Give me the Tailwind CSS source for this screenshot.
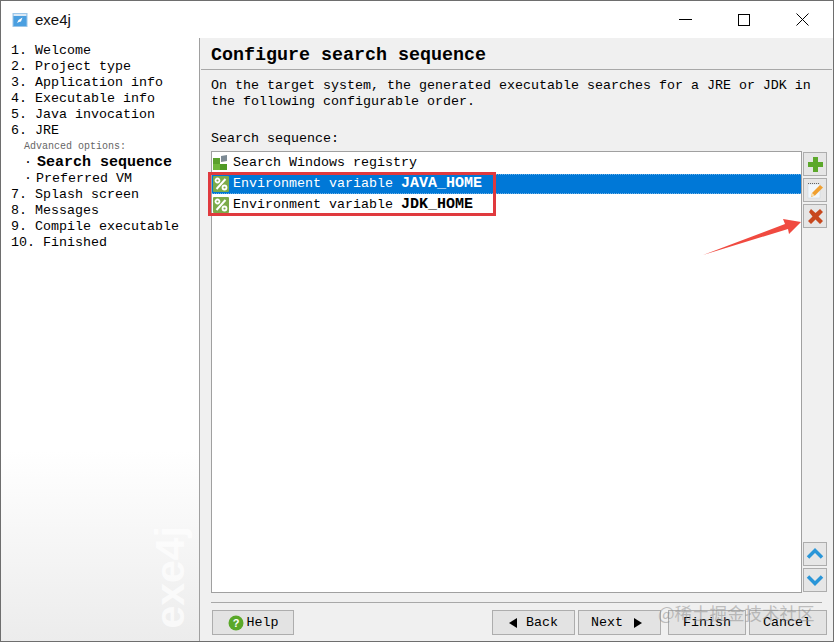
<!DOCTYPE html>
<html>
<head>
<meta charset="utf-8">
<script src="https://cdn.jsdelivr.net/npm/@tailwindcss/browser@4"></script>
</head>
<body class="bg-white">
<div class="relative w-[834px] h-[642px] overflow-hidden flex flex-col bg-white border border-[#6e6e6e] font-['Liberation_Mono',monospace] text-[13.33px] leading-4 text-black">

    <!-- title bar -->
    <div class="h-[37px] shrink-0 flex items-center bg-white">
        <svg class="ml-[11px] w-4 h-4" viewBox="0 0 16 16">
            <rect x="1" y="1.5" width="14" height="13" fill="#4a9fe0" stroke="#9cc6e8"/>
            <rect x="1.5" y="2" width="13" height="2" fill="#dbe9f5"/>
            <path d="M5 11l1.5-3 4-2.500-1.500 4-2 .5z" fill="#fff"/>
        </svg>
        <span class="ml-[7px] font-['Liberation_Sans',sans-serif] text-[15px] text-[#111]">exe4j</span>
        <div class="ml-auto flex items-center mr-[24px] gap-[46px]">
            <svg class="w-[13px] h-[13px]" viewBox="0 0 13 13"><path d="M0 6.500h13" stroke="#000" stroke-width="1"/></svg>
            <svg class="w-[12px] h-[12px]" viewBox="0 0 12 12"><rect x=".5" y=".5" width="11" height="11" fill="none" stroke="#000"/></svg>
            <svg class="w-[13px] h-[13px]" viewBox="0 0 13 13"><path d="M.5.5l12 12M12.500.5l-12 12" stroke="#000"/></svg>
        </div>
    </div>

    <div class="flex flex-1 min-h-0">
        <!-- sidebar -->
        <div class="relative w-[199px] shrink-0 bg-white border-r border-[#a0a0a0] pl-[10px] pt-[5px]">
            <div class="absolute left-0 right-0 bottom-0 h-[190px] bg-gradient-to-b from-white to-[#ececec]"></div>
            <div class="relative">
                <div class="whitespace-pre">1. Welcome</div>
                <div class="whitespace-pre">2. Project type</div>
                <div class="whitespace-pre">3. Application info</div>
                <div class="whitespace-pre">4. Executable info</div>
                <div class="whitespace-pre">5. Java invocation</div>
                <div class="whitespace-pre">6. JRE</div>
                <div class="pl-[13px] text-[10px] text-[#666]">Advanced options:</div>
                <div class="pl-[13px] whitespace-pre"><span class="inline-block w-[13px]">·</span><span class="font-bold text-[15px]">Search sequence</span></div>
                <div class="pl-[13px] whitespace-pre"><span class="inline-block w-[12px]">·</span>Preferred VM</div>
                <div class="whitespace-pre">7. Splash screen</div>
                <div class="whitespace-pre">8. Messages</div>
                <div class="whitespace-pre">9. Compile executable</div>
                <div class="whitespace-pre">10. Finished</div>
            </div>
            <div class="absolute left-[150px] bottom-[12px] [writing-mode:vertical-rl] rotate-180 font-['Liberation_Sans',sans-serif] font-bold text-[41px] leading-[38px] text-white/70">exe4j</div>
        </div>

        <!-- main panel -->
        <div class="flex-1 min-w-0 flex flex-col bg-[#f0f0f0]">
            <div class="mx-[1px] pl-[10px] pt-[5px] h-[32px] shrink-0 flex items-center border-b border-[#a8a8a8]">
                <h1 class="font-bold text-[18.33px] leading-6">Configure search sequence</h1>
            </div>
            <div class="pl-[11px] pt-[8px]">
                <p class="whitespace-pre">On the target system, the generated executable searches for a JRE or JDK in</p>
                <p class="whitespace-pre">the following configurable order.</p>
            </div>
            <div class="pl-[11px] mt-[21px] h-[16px]">Search sequence:</div>

            <div class="flex pl-[11px] mt-[4px] h-[442px]">
                <div class="w-[591px] bg-white border border-[#a0a0a0] pt-[1px]">
                    <div class="h-[20px] mb-[1px] flex items-center pl-[1px]">
                        <svg class="w-4 h-4 mr-[4px]" viewBox="0 0 16 16">
                            <rect x="0" y="3" width="7" height="6" fill="#5aa02c"/>
                            <rect x="0" y="9" width="7" height="6" fill="#6fb63a"/>
                            <rect x="7" y="9" width="7" height="6" fill="#4f9a26"/>
                            <path d="M8 1l6-1v6l-6 1z" fill="#7d8a94"/>
                        </svg>
                        <span>Search Windows registry</span>
                    </div>
                    <div class="h-[20px] mb-[1px] flex items-center pl-[1px] bg-[#0078d7] text-white border-y border-dotted border-[#6bb0e6]">
                        <svg class="w-4 h-4 mr-[4px]" viewBox="0 0 16 16">
                            <rect width="16" height="16" rx="1" fill="#7cab4a"/>
                            <path d="M3.500 13L12.500 3" stroke="#fff" stroke-width="2"/>
                            <circle cx="4.500" cy="4.500" r="2" fill="none" stroke="#fff" stroke-width="1.800"/>
                            <circle cx="11.500" cy="11.500" r="2" fill="none" stroke="#fff" stroke-width="1.800"/>
                        </svg>
                        <span class="whitespace-pre">Environment variable <b class="text-[15px]">JAVA_HOME</b></span>
                    </div>
                    <div class="h-[20px] flex items-center pl-[1px]">
                        <svg class="w-4 h-4 mr-[4px]" viewBox="0 0 16 16">
                            <rect width="16" height="16" rx="1" fill="#7cab4a"/>
                            <path d="M3.500 13L12.500 3" stroke="#fff" stroke-width="2"/>
                            <circle cx="4.500" cy="4.500" r="2" fill="none" stroke="#fff" stroke-width="1.800"/>
                            <circle cx="11.500" cy="11.500" r="2" fill="none" stroke="#fff" stroke-width="1.800"/>
                        </svg>
                        <span class="whitespace-pre">Environment variable <b class="text-[15px]">JDK_HOME</b></span>
                    </div>
                </div>

                <div class="ml-[1px] w-[24px] pt-[1px] pb-[1px] flex flex-col">
                    <button class="w-[24px] h-[24px] mb-[2px] flex items-center justify-center bg-[#e6e6e6] border border-[#adadad]">
                        <svg class="w-[15px] h-[15px]" viewBox="0 0 15 15"><path d="M5 0h5v5h5v5h-5v5H5v-5H0V5h5z" fill="#5ca82b"/></svg>
                    </button>
                    <button class="w-[24px] h-[24px] mb-[2px] flex items-center justify-center bg-[#e6e6e6] border border-[#adadad]">
                        <svg class="w-[17px] h-[17px]" viewBox="0 0 17 17">
                            <rect x="1" y="2" width="12" height="14" fill="#f2f7fb" stroke="#c5d3de" stroke-width=".5"/>
                            <path d="M1 1.500h12" stroke="#666" stroke-dasharray="1 1"/>
                            <path d="M5 11l8-8 3 2.500-8 8-4 1.500z" fill="#f0a030"/>
                            <path d="M4 14.500l1-3.500 3 2.500z" fill="#f7e0b0"/>
                        </svg>
                    </button>
                    <button class="w-[24px] h-[24px] flex items-center justify-center bg-[#e6e6e6] border border-[#adadad]">
                        <svg class="w-[17px] h-[17px]" viewBox="0 0 17 17"><path d="M2 4l2-3 4.500 4L13 1l3 3-4.500 4.500L16 13l-3 3-4.500-4.500L4 16l-3-3 4.500-4.500z" fill="#c8481e"/></svg>
                    </button>
                    <button class="mt-auto w-[24px] h-[24px] mb-[2px] flex items-center justify-center bg-[#e6e6e6] border border-[#adadad]">
                        <svg class="w-[18px] h-[18px]" viewBox="0 0 18 18"><path d="M2 12.500l7-7 7 7" fill="none" stroke="#2a96d8" stroke-width="3.500"/></svg>
                    </button>
                    <button class="w-[24px] h-[24px] flex items-center justify-center bg-[#e6e6e6] border border-[#adadad]">
                        <svg class="w-[18px] h-[18px]" viewBox="0 0 18 18"><path d="M2 5.500l7 7 7-7" fill="none" stroke="#2a96d8" stroke-width="3.500"/></svg>
                    </button>
                </div>
            </div>

            <!-- footer -->
            <div class="mt-[9px] mx-[11px] border-t border-[#a8a8a8]"></div>
            <div class="flex items-center pl-[12px] pt-[7px]">
                <button class="w-[82px] h-[25px] flex items-center justify-center bg-[#e3e3e3] border border-[#adadad]">
                    <svg class="w-4 h-4 mr-[3px]" viewBox="0 0 16 16">
                        <circle cx="8" cy="8" r="7.500" fill="#5aa829"/>
                        <text x="8" y="12" text-anchor="middle" fill="#fff" font-size="11" font-weight="bold" font-family="Liberation Sans">?</text>
                    </svg>
                    Help
                </button>
                <button class="ml-[198px] w-[83px] h-[25px] flex items-center justify-center bg-[#e3e3e3] border border-[#adadad]">
                    <svg class="w-[8px] h-[10px] mr-[9px]" viewBox="0 0 8 10"><path d="M8 0v10L0 5z" fill="#000"/></svg>
                    Back
                </button>
                <button class="ml-[3px] w-[83px] h-[25px] flex items-center justify-center pr-[6px] bg-[#e3e3e3] border border-[#adadad]">
                    Next
                    <svg class="w-[8px] h-[10px] ml-[11px]" viewBox="0 0 8 10"><path d="M0 0v10l8-5z" fill="#000"/></svg>
                </button>
                <button class="ml-[7px] w-[78px] h-[25px] flex items-center justify-center bg-[#e3e3e3] border border-[#adadad]">Finish</button>
                <button class="ml-[3px] w-[78px] h-[25px] flex items-center justify-center pr-[2px] bg-[#e3e3e3] border border-[#adadad]">Cancel</button>
            </div>
        </div>
    </div>

    <!-- screenshot annotations -->
    <div class="absolute left-[207px] top-[171px] w-[288px] h-[44px] border-[3px] border-[#e03a3e]"></div>
    <svg class="absolute left-[-1px] top-[-1px] w-[834px] h-[642px] pointer-events-none" viewBox="0 0 834 642">
        <path d="M703 255L785 224 783 219 801 222 789 234 788 229z" fill="#f04a40"/>
    </svg>
    <div class="absolute left-[657px] top-[600px] font-['Noto_Sans_CJK_SC',sans-serif] text-[17.5px] leading-6 whitespace-nowrap text-[#8a8a8a]/50">@稀土掘金技术社区</div>
</div>
</body>
</html>
